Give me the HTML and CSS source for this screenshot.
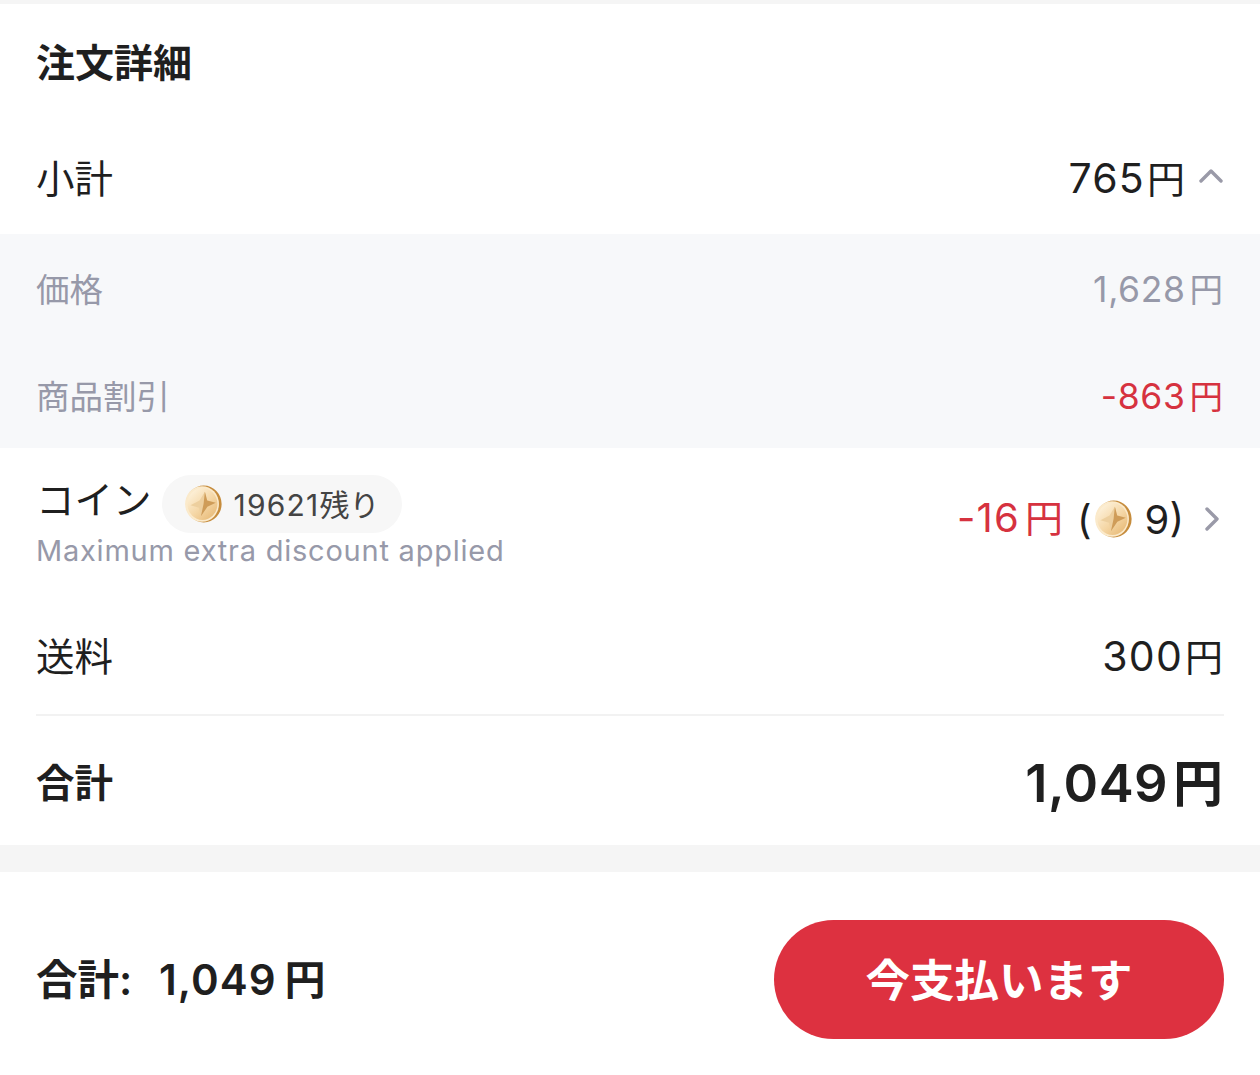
FILE: index.html
```html
<!DOCTYPE html>
<html lang="ja">
<head>
<meta charset="utf-8">
<title>注文詳細</title>
<link rel="stylesheet" href="styles.css">
</head>
<body>
<svg class="defs" width="0" height="0" aria-hidden="true">
  <defs>
    <linearGradient id="coinface" x1="0.15" y1="0.1" x2="0.85" y2="0.9">
      <stop offset="0" stop-color="#fdf0d8"/>
      <stop offset="0.55" stop-color="#f5d7a6"/>
      <stop offset="1" stop-color="#e9bd7c"/>
    </linearGradient>
    <symbol id="coin" viewBox="0 0 40 40">
      <ellipse cx="20.8" cy="20" rx="18.8" ry="19.4" fill="#c68c3c"/>
      <ellipse cx="19" cy="20" rx="17.8" ry="18.8" fill="#fbeacb"/>
      <ellipse cx="19.4" cy="20" rx="15.8" ry="16.8" fill="url(#coinface)"/>
      <path d="M22 7 L24.4 16.2 L33.5 18.8 L24.6 23 L17.8 33 L15.9 24 L6.8 21.2 L16.4 16.2 Z" fill="#edcf9e"/>
      <path d="M22 7 L20.6 20 L33.5 18.8 L24.4 16.2 Z M20.6 20 L17.8 33 L24.6 23 L33.5 18.8 Z" fill="#cf9c58"/>
    </symbol>
  </defs>
</svg>
<main class="page">
  <section class="details">
    <h1 class="title">注文詳細</h1>
    <div class="row row-subtotal">
      <span>小計</span>
      <span class="value"><span class="amount">765<span class="yen">円</span></span><svg class="chev chev-up" viewBox="0 0 24 24"><path d="M2 17 L12 7 L22 17"/></svg></span>
    </div>
    <div class="breakdown">
      <div class="sub-row"><span>価格</span><span class="sub-amount">1,628<span class="yen">円</span></span></div>
      <div class="sub-row"><span>商品割引</span><span class="sub-amount red">-863<span class="yen">円</span></span></div>
    </div>
    <div class="row row-coin">
      <div class="coin-left">
        <div class="coin-head">
          <span class="coin-label">コイン</span>
          <span class="pill"><svg class="coin-icon"><use href="#coin"/></svg><span class="pill-text"><span class="pill-num">19621</span>残り</span></span>
        </div>
        <div class="coin-note">Maximum extra discount applied</div>
      </div>
      <span class="value"><span class="amount coin-amount red">-16<span class="yen">円</span></span><span class="paren">(<svg class="coin-icon coin-inline"><use href="#coin"/></svg>9)</span><svg class="chev chev-right" viewBox="0 0 24 24"><path d="M7 2 L17 12 L7 22"/></svg></span>
    </div>
    <div class="row row-ship"><span>送料</span><span class="amount">300<span class="yen">円</span></span></div>
    <div class="total">
      <span class="total-label">合計</span>
      <span class="total-value">1,049<span class="yen-total">円</span></span>
    </div>
  </section>
  <footer class="paybar">
    <div class="pay-total"><span class="pay-label">合計:</span><span class="pay-num">1,049</span><span class="pay-yen">円</span></div>
    <button class="pay-btn" type="button">今支払います</button>
  </footer>
</main>
</body>
</html>
```
FILE: styles.css
```css
* { box-sizing: border-box; }
html, body { margin: 0; padding: 0; }
body {
  background: #f5f5f5;
  color: #1f1f1f;
  font-family: Inter, "Noto Sans CJK JP", sans-serif;
  width: 1260px;
  height: 1075px;
  overflow: hidden;
}
.defs { position: absolute; }
.page { padding-top: 4px; }
.details { background: #fff; height: 841px; }
.title {
  margin: 0;
  padding: 0 36px 7px;
  height: 119px;
  display: flex;
  align-items: center;
  font-size: 39px;
  font-weight: 700;
}
.row {
  display: flex;
  justify-content: space-between;
  align-items: center;
  padding: 0 36px;
  font-size: 38.5px;
}
.row-subtotal { height: 111px; padding-bottom: 5px; }
.value { display: flex; align-items: center; }
.amount { font-size: 41px; letter-spacing: 1.2px; }
.yen { font-size: 38px; margin-left: 2px; margin-right: 1px; letter-spacing: 0; }
.sub-amount { font-size: 35.5px; letter-spacing: 0.6px; }
.sub-amount .yen { font-size: 33.5px; margin-left: 4px; }
.chev { fill: none; stroke: #9a9aa8; stroke-width: 3.4; width: 24px; height: 24px; stroke-linecap: round; stroke-linejoin: round; }
.chev-up { margin-left: 13px; margin-right: 1px; margin-top: -1px; }
.chev-right { margin-left: 16px; }
.breakdown { background: #f7f8fa; height: 214px; padding-top: 2px; }
.sub-row {
  display: flex;
  justify-content: space-between;
  align-items: center;
  height: 107px;
  padding: 0 36px 4px;
  font-size: 33.5px;
  color: #9799a9;
}
.red { color: #d6323f; }
.row-coin { height: 142px; }
.coin-left { display: flex; flex-direction: column; }
.coin-head { display: flex; align-items: center; gap: 10px; }
.coin-label { padding-bottom: 14px; }
.pill {
  display: flex;
  align-items: center;
  height: 58px;
  padding: 0 23px 0 22px;
  border-radius: 29px;
  background: #f7f7f7;
  font-size: 30px;
  color: #444;
  gap: 12px;
}
.pill-text { padding-bottom: 3px; }
.pill-num { letter-spacing: 1.2px; }
.coin-icon { width: 38px; height: 38px; display: block; }
.coin-note { font-size: 29px; color: #9799a9; letter-spacing: 0.77px; line-height: 36px; margin-top: -6px; }
.coin-amount { font-size: 40px; padding-bottom: 7px; }
.coin-amount .yen { margin-left: 5px; }
.paren { display: flex; align-items: center; margin-left: 13px; font-size: 40px; }
.coin-inline { margin: 0 13px 0 2px; }
.row-ship { height: 124px; padding-top: 4px; }
.total {
  display: flex;
  justify-content: space-between;
  align-items: center;
  margin: 0 36px;
  height: 135px;
  padding-bottom: 6px;
  border-top: 2px solid #f2f2f2;
}
.total-label { font-size: 38.5px; font-weight: 700; }
.total-value { font-size: 52.5px; font-weight: 600; letter-spacing: 0.4px; }
.yen-total { font-size: 50px; font-weight: 600; margin-left: 5px; margin-right: 1px; letter-spacing: 0; }
.paybar {
  margin-top: 27px;
  background: #fff;
  height: 215px;
  display: flex;
  justify-content: space-between;
  align-items: center;
  padding: 0 36px 1px;
}
.pay-total { display: flex; align-items: baseline; font-size: 41.5px; font-weight: 600; padding-bottom: 4px; }
.pay-label { width: 123px; }
.pay-num { font-size: 42px; letter-spacing: 1px; }
.pay-yen { margin-left: 8px; font-size: 41px; }
.pay-btn {
  width: 450px;
  height: 119px;
  border: 0;
  border-radius: 60px;
  padding: 0 0 4px;
  background: #dd3140;
  color: #fff;
  font-family: inherit;
  font-size: 44.5px;
  font-weight: 600;
}
```
